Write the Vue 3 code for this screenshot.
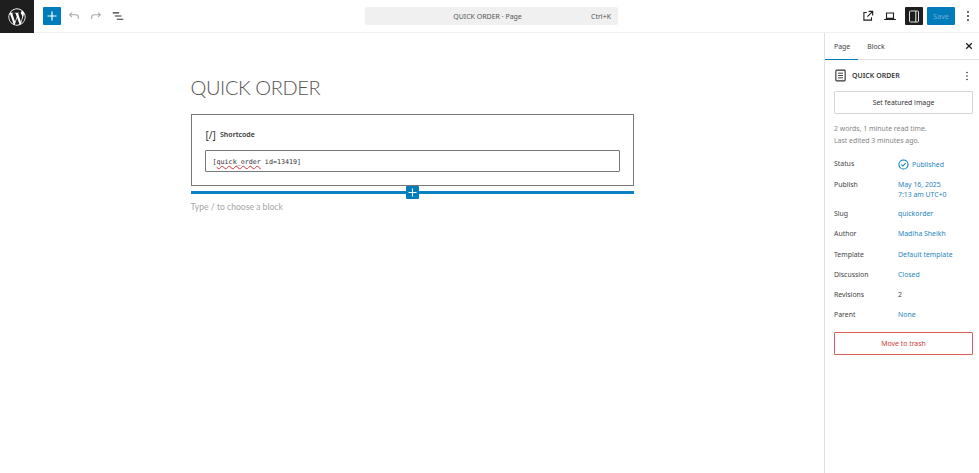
<script setup>
const rows = [
  { label: 'Status', lines: ['Published'], icon: true },
  { label: 'Publish', lines: ['May 16, 2025', '7:13 am UTC+0'] },
  { label: 'Slug', lines: ['quickorder'] },
  { label: 'Author', lines: ['Madiha Sheikh'] },
  { label: 'Template', lines: ['Default template'] },
  { label: 'Discussion', lines: ['Closed'] },
  { label: 'Revisions', lines: ['2'], plain: true },
  { label: 'Parent', lines: ['None'] },
]
</script>

<template>
  <div class="editor">
    <header class="topbar">
      <div class="wp-logo">
        <svg width="18" height="18" viewBox="0 0 20 20"><path fill="#fff" d="M10 .4a9.6 9.6 0 1 0 0 19.2A9.6 9.6 0 0 0 10 .4zM1.4 10c0-1.25.27-2.43.75-3.5l4.1 11.24A8.6 8.6 0 0 1 1.4 10zm8.6 8.6c-.84 0-1.66-.12-2.43-.35l2.58-7.5 2.64 7.24.06.12c-.89.31-1.85.49-2.85.49zm1.18-12.63c.52-.03.99-.08.99-.08.46-.06.41-.74-.06-.71 0 0-1.4.11-2.3.11-.85 0-2.27-.11-2.27-.11-.47-.03-.52.68-.05.71 0 0 .44.05.91.08l1.35 3.7-1.9 5.7-3.16-9.4c.52-.03.99-.08.99-.08.47-.06.41-.74-.06-.71 0 0-1.4.11-2.3.11h-.56A8.59 8.59 0 0 1 10 1.4c2.24 0 4.28.86 5.81 2.26h-.11c-.85 0-1.45.74-1.45 1.53 0 .71.41 1.31.85 2.02.33.58.71 1.32.71 2.39 0 .74-.28 1.6-.66 2.79l-.86 2.88-3.11-9.3zm3.14 11.47 2.63-7.6c.49-1.23.66-2.21.66-3.08 0-.32-.02-.61-.06-.89A8.57 8.57 0 0 1 18.6 10a8.6 8.6 0 0 1-4.28 7.44z"/></svg>
      </div>
      <div class="tools-left">
        <button class="inserter">
          <svg width="10" height="10" viewBox="0 0 10 10"><path d="M5 .5v9M.5 5h9" stroke="#fff" stroke-width="1.2"/></svg>
        </button>
        <svg class="tool undo" width="14" height="14" viewBox="0 0 24 24"><path fill="none" stroke="#a8a8a8" stroke-width="1.8" d="M8.5 6 4.5 10l4 4M4.5 10H15a4.5 4.5 0 0 1 4.5 4.5V17"/></svg>
        <svg class="tool" width="14" height="14" viewBox="0 0 24 24"><path fill="none" stroke="#a8a8a8" stroke-width="1.8" d="M15.5 6l4 4-4 4M19.5 10H9a4.5 4.5 0 0 0-4.5 4.5V17"/></svg>
        <svg class="tool" width="14" height="14" viewBox="0 0 24 24"><path fill="none" stroke="#333" stroke-width="2" d="M3 6.5h11M6.5 12H18M10 17.5h11"/></svg>
      </div>
      <div class="command-wrap">
        <div class="command">
          <span class="command-title">QUICK ORDER · Page</span>
          <span class="command-key">Ctrl+K</span>
        </div>
      </div>
      <div class="tools-right">
        <svg class="r-icon" width="14" height="14" viewBox="0 0 24 24"><path fill="none" stroke="#1e1e1e" stroke-width="1.9" d="M18 14v5H5V6h5M13 4h7v7M20 4l-9 9"/></svg>
        <svg class="r-icon" width="14" height="14" viewBox="0 0 24 24"><path fill="none" stroke="#1e1e1e" stroke-width="1.9" d="M6 6.8h12V16H6zM2 18h20"/></svg>
        <button class="sidebar-toggle">
          <svg width="12" height="13" viewBox="0 0 12 13"><rect x="1.5" y="1" width="9" height="11" rx="1" fill="none" stroke="#ddd" stroke-width="1"/><path d="M7.8 1v11" stroke="#ddd" stroke-width="1.1"/></svg>
        </button>
        <button class="save">Save</button>
        <svg class="more" width="4" height="14" viewBox="0 0 4 14"><circle cx="2" cy="3" r=".9" fill="#1e1e1e"/><circle cx="2" cy="7" r=".9" fill="#1e1e1e"/><circle cx="2" cy="11" r=".9" fill="#1e1e1e"/></svg>
      </div>
    </header>

    <div class="body">
      <main class="canvas">
        <div class="column">
          <h1 class="title">QUICK ORDER</h1>
          <section class="shortcode">
            <div class="sc-label"><span class="sc-icon">[/]</span><span>Shortcode</span></div>
            <div class="sc-input"><span>[</span><span class="misspelt">quick_order</span><span> id=13419]</span></div>
          </section>
          <div class="insert-line">
            <span class="insert-btn">
              <svg width="9" height="9" viewBox="0 0 10 10"><path d="M5 .5v9M.5 5h9" stroke="#fff" stroke-width="1.2"/></svg>
            </span>
          </div>
          <p class="placeholder">Type / to choose a block</p>
        </div>
      </main>

      <aside class="sidebar">
        <div class="tabs">
          <span class="tab active">Page</span>
          <span class="tab">Block</span>
          <svg class="close" width="8" height="8" viewBox="0 0 10 10"><path d="M1.5 1.5l7 7M8.5 1.5l-7 7" stroke="#1e1e1e" stroke-width="1.6"/></svg>
        </div>
        <div class="panel">
          <div class="doc-head">
            <svg width="13" height="13" viewBox="0 0 14 14"><rect x="2" y="1.2" width="10" height="11.6" rx="1" fill="none" stroke="#333" stroke-width="1.2"/><path d="M4.3 4.5h5.4M4.3 7h5.4M4.3 9.5h5.4" stroke="#333" stroke-width="1"/></svg>
            <span class="doc-title">QUICK ORDER</span>
            <svg width="4" height="12" viewBox="0 0 4 12"><circle cx="2" cy="2.5" r=".8" fill="#333"/><circle cx="2" cy="6" r=".8" fill="#333"/><circle cx="2" cy="9.5" r=".8" fill="#333"/></svg>
          </div>
          <button class="featured">Set featured image</button>
          <p class="meta">2 words, 1 minute read time.<br>Last edited 3 minutes ago.</p>
          <dl class="rows">
            <div v-for="r in rows" :key="r.label" class="row" :class="{ tall: r.lines.length > 1 }">
              <dt>{{ r.label }}</dt>
              <dd :class="{ plain: r.plain }">
                <svg v-if="r.icon" class="status-icon" width="11" height="11" viewBox="0 0 12 12"><circle cx="6" cy="6" r="5" fill="none" stroke="#007cba" stroke-width="1.1"/><path d="M3.6 6.2l1.7 1.6 3-3.4" fill="none" stroke="#007cba" stroke-width="1.1"/></svg>
                <span><template v-for="(l, i) in r.lines" :key="l"><br v-if="i">{{ l }}</template></span>
              </dd>
            </div>
          </dl>
          <button class="trash">Move to trash</button>
        </div>
      </aside>
    </div>
  </div>
</template>

<style>
html, body { margin: 0; background: #fff; }
</style>

<style scoped>
.editor {
  width: 979px;
  height: 473px;
  display: flex;
  flex-direction: column;
  overflow: hidden;
  font-family: "Noto Sans", sans-serif;
  color: #1e1e1e;
  background: #fff;
}
.topbar {
  height: 32px;
  flex: none;
  display: flex;
  align-items: center;
  border-bottom: 1px solid #f0f0f0;
}
.wp-logo {
  width: 34px;
  height: 33px;
  margin-bottom: -1px;
  background: #1e1e1e;
  display: flex;
  align-items: center;
  justify-content: center;
}
.tools-left {
  display: flex;
  align-items: center;
  margin-left: 9px;
  width: 322px;
}
.inserter {
  width: 18px;
  height: 18px;
  padding: 0;
  border: 0;
  border-radius: 1px;
  background: #007cba;
  display: flex;
  align-items: center;
  justify-content: center;
}
.tool { margin-left: 8px; }
.tool.undo { margin-left: 6px; }
.command-wrap { flex: none; }
.command {
  width: 253px;
  height: 18px;
  box-sizing: border-box;
  padding-right: 8px;
  border-radius: 2px;
  background: #f0f0f0;
  position: relative;
  display: flex;
  align-items: center;
  justify-content: center;
  font-size: 7px;
  color: #555;
}
.command-key {
  position: absolute;
  right: 7px;
}
.tools-right {
  margin-left: auto;
  display: flex;
  align-items: center;
}
.r-icon { margin-right: 8px; }
.sidebar-toggle {
  width: 18px;
  height: 18px;
  padding: 0;
  border: 0;
  border-radius: 1px;
  background: #1e1e1e;
  display: flex;
  align-items: center;
  justify-content: center;
}
.save {
  width: 28px;
  height: 18px;
  margin-left: 4px;
  padding: 0;
  border: 0;
  border-radius: 1px;
  background: #007cba;
  color: #6fb0d2;
  font: 7px "Noto Sans", sans-serif;
}
.more { margin: 0 9px 0 11px; }
.body {
  flex: 1;
  display: flex;
  min-height: 0;
}
.canvas {
  flex: 1;
  min-width: 0;
  display: flex;
  justify-content: center;
}
.column {
  width: 443px;
  padding-top: 39px;
}
.title {
  margin: 0;
  font-family: Lato, sans-serif;
  font-weight: 300;
  font-size: 20px;
  letter-spacing: -0.4px;
  line-height: 30px;
  color: #555;
}
.shortcode {
  margin-top: 12px;
  height: 72px;
  box-sizing: border-box;
  border: 1px solid #777;
  padding: 0 13px;
}
.sc-label {
  display: flex;
  align-items: center;
  height: 35px;
  box-sizing: border-box;
  padding: 4px 0 0 1px;
  font-size: 7px;
  font-weight: 600;
  color: #333;
}
.sc-icon {
  font-size: 10px;
  font-weight: 400;
  width: 14.5px;
}
.sc-input {
  height: 22px;
  box-sizing: border-box;
  border: 1px solid #777;
  border-radius: 1px;
  padding: 2px 0 0 7px;
  display: flex;
  align-items: center;
  font-family: "DejaVu Sans Mono", monospace;
  font-size: 6.7px;
  color: #333;
  white-space: pre;
}
.misspelt {
  text-decoration: underline wavy #d63638 1px;
  text-underline-offset: 1px;
}
.insert-line {
  margin-top: 5px;
  height: 3px;
  background: #0a82c2;
  position: relative;
}
.insert-btn {
  position: absolute;
  left: 215px;
  top: -5px;
  width: 13px;
  height: 13px;
  background: #007cba;
  border-radius: 1px;
  display: flex;
  align-items: center;
  justify-content: center;
}
.placeholder {
  margin: 6px 0 0;
  font-family: Lato, sans-serif;
  font-size: 8.6px;
  line-height: 14px;
  color: #a5a5a5;
}
.sidebar {
  width: 154px;
  flex: none;
  border-left: 1px solid #e0e0e0;
  font-size: 6.9px;
}
.tabs {
  height: 26px;
  display: flex;
  align-items: center;
  position: relative;
  border-bottom: 1px solid #e0e0e0;
  padding-left: 9px;
  font-size: 6.9px;
}
.tab { margin-right: 17px; color: #444; }
.tab.active::after {
  content: "";
  position: absolute;
  left: 0;
  bottom: -1px;
  width: 33px;
  height: 1.5px;
  background: #007cba;
}
.close { margin-left: auto; margin-right: 6px; }
.panel { padding: 0 5px 0 9px; }
.doc-head {
  display: flex;
  align-items: center;
  height: 31px;
  padding: 0 5px 0 0;
}
.doc-title {
  flex: 1;
  margin-left: 5px;
  font-weight: 600;
  font-size: 7px;
  color: #333;
}
.featured {
  display: block;
  width: 139px;
  height: 23px;
  padding: 0;
  background: #fff;
  border: 1px solid #d5d5d5;
  border-radius: 1px;
  color: #333;
  font: 6.9px "Noto Sans", sans-serif;
}
.meta {
  margin: 9px 0 0;
  color: #858585;
  font-size: 6.9px;
  line-height: 12px;
}
.rows { margin: 12px 0 0; }
.row {
  display: flex;
  margin-bottom: 10.3px;
  line-height: 10px;
}
.row.tall { margin-bottom: 8.7px; }
.row dt { width: 64px; color: #444; }
.row dd {
  margin: 0;
  color: #1f87bd;
  display: flex;
  align-items: center;
}
.row dd.plain { color: #444; }
.status-icon { margin-right: 3px; }
.trash {
  display: block;
  width: 139px;
  height: 23px;
  margin-top: 11.7px;
  padding: 0;
  background: #fff;
  border: 1px solid #dc5c5c;
  border-radius: 1px;
  color: #cf3a3a;
  font: 6.9px "Noto Sans", sans-serif;
}
</style>
